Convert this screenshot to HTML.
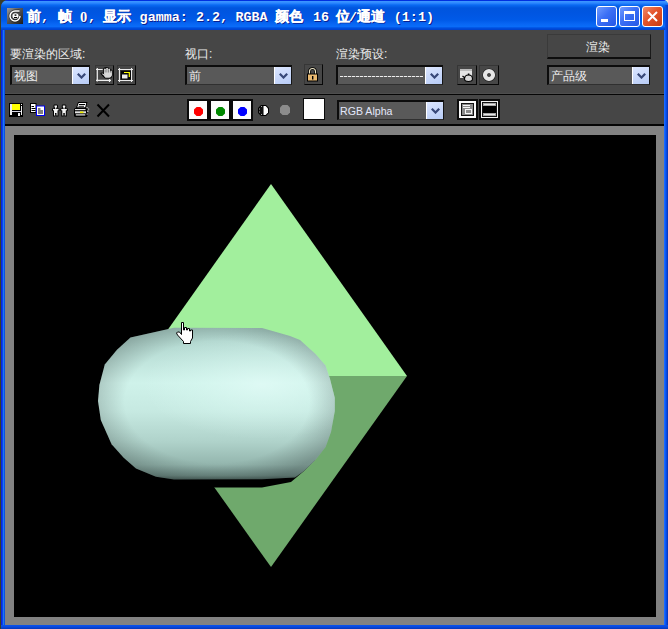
<!DOCTYPE html>
<html><head><meta charset="utf-8">
<style>
html,body{margin:0;padding:0;}
body{width:668px;height:629px;overflow:hidden;position:relative;background:#3a3d28;font-family:"Liberation Sans",sans-serif;}
.a{position:absolute;}
#win{left:1px;top:0;width:667px;height:629px;background:#0a4fe6;border-radius:7px 5px 0 0;}
#title{left:1px;top:0;width:667px;height:30px;border-radius:7px 5px 0 0;
 background:linear-gradient(to bottom,#0030e0 0px,#0030e0 0.5px,#3a94ff 1.5px,#2e88ff 3px,#0a6af2 5px,#0055de 8px,#0056e2 14px,#005ae8 20px,#0866f4 24px,#0a6cf8 26.5px,#0050e0 28px,#0040cc 30px);}
#body{left:5px;top:30px;width:659px;height:595px;background:#464646;}
#frame{left:5px;top:126px;width:659px;height:499px;background:#828282;}
#render{left:14px;top:135px;width:642px;height:482px;background:#000;}
.lbl{position:absolute;color:#ececec;font-size:12px;line-height:12px;white-space:nowrap;}
.dd{position:absolute;background:#595959;border-top:2px solid #0c0c0c;border-left:2px solid #0c0c0c;border-right:1px solid #141414;border-bottom:1px solid #303030;box-sizing:border-box;}
.ddb{position:absolute;right:0;top:0;bottom:0;width:17px;background:linear-gradient(160deg,#dce6ff,#b8ccf6);border-left:1px solid #fff;box-sizing:border-box;}
.btn{position:absolute;box-sizing:border-box;border-top:1px solid #363636;border-left:1px solid #363636;border-right:1px solid #080808;border-bottom:1px solid #080808;background:#474747;}
.sep{position:absolute;left:5px;width:659px;height:2px;background:#1c1c1c;}
.tc{position:absolute;top:8px;font-size:14px;line-height:16px;font-weight:bold;-webkit-text-stroke:0.3px #fff;text-shadow:1px 1px 0 #0a2090;}
.tl{position:absolute;top:10px;font-family:"Liberation Mono",monospace;font-size:13.4px;line-height:16px;font-weight:bold;text-shadow:1px 1px 0 #0a2090;}
.wb{position:absolute;top:6px;width:21px;height:21px;box-sizing:border-box;border:1px solid #fff;border-radius:3px;}
</style></head><body>
<div class="a" style="left:658px;top:0;width:10px;height:10px;background:#e8ecd8"></div>
<div class="a" id="win"></div>
<div class="a" id="title"></div>
<!-- left frame column -->
<div class="a" style="left:1px;top:30px;width:4px;height:599px;background:linear-gradient(to right,#0528e0 0,#0528e0 1px,#0a40ec 1px,#0a40ec 2px,#1c78f0 2px,#1c78f0 3px,#0a50e4 3px)"></div><div class="a" style="left:5px;top:30px;width:1px;height:595px;background:#6a6a58"></div>
<div class="a" style="left:664px;top:30px;width:4px;height:599px;background:linear-gradient(to right,#1a6aff 0,#1a6aff 1px,#0a58f5 1px,#0a58f5 2px,#0848e0 2px,#0848e0 3px,#0638c0 3px)"></div>
<div class="a" style="left:1px;top:625px;width:667px;height:4px;background:linear-gradient(to bottom,#0a54ee,#0a48dc 50%,#0636b8)"></div>
<div class="a" style="left:665px;top:5px;width:3px;height:25px;background:linear-gradient(to right,#0a50e8,#0838c0)"></div>
<div class="a" id="body"></div>
<div class="a" id="frame"></div>
<div class="a" id="render"></div>


<!-- ===== RENDER CONTENT ===== -->
<svg class="a" style="left:0;top:0" width="668" height="629" viewBox="0 0 668 629">
 <defs>
  <linearGradient id="cv" x1="0" y1="328" x2="0" y2="480" gradientUnits="userSpaceOnUse">
   <stop offset="0" stop-color="#a6cbc3"/>
   <stop offset="0.12" stop-color="#b6dbd3"/>
   <stop offset="0.36" stop-color="#cff2ea"/>
   <stop offset="0.55" stop-color="#c6e9e1"/>
   <stop offset="0.75" stop-color="#afd2ca"/>
   <stop offset="0.9" stop-color="#93b5ad"/>
   <stop offset="0.97" stop-color="#718f88"/>
   <stop offset="1" stop-color="#4c625d"/>
  </linearGradient>
  <radialGradient id="hl" cx="262" cy="385" r="120" gradientUnits="userSpaceOnUse" gradientTransform="translate(262 385) scale(1 0.45) translate(-262 -385)">
   <stop offset="0" stop-color="#e8fffb" stop-opacity="0.6"/>
   <stop offset="0.6" stop-color="#e0fff8" stop-opacity="0.25"/>
   <stop offset="1" stop-color="#e0fff8" stop-opacity="0"/>
  </radialGradient>
  <linearGradient id="ch" x1="98" y1="0" x2="335" y2="0" gradientUnits="userSpaceOnUse">
   <stop offset="0" stop-color="#000" stop-opacity="0.14"/>
   <stop offset="0.35" stop-color="#000" stop-opacity="0"/>
   <stop offset="0.82" stop-color="#000" stop-opacity="0"/>
   <stop offset="1" stop-color="#000" stop-opacity="0.08"/>
  </linearGradient>
  <radialGradient id="vg" cx="217" cy="402" r="128" gradientUnits="userSpaceOnUse" gradientTransform="translate(217 402) scale(1 0.66) translate(-217 -402)">
   <stop offset="0" stop-color="#000" stop-opacity="0"/>
   <stop offset="0.72" stop-color="#000" stop-opacity="0"/>
   <stop offset="1" stop-color="#000" stop-opacity="0.2"/>
  </radialGradient>
 </defs>
 <polygon points="271,184 407,376 135,376" fill="#a2ef9d"/>
 <polygon points="135,376 407,376 271,567" fill="#6fa96c"/>
 <polygon points="136,468 156,482 180,487.5 262,487.5 291,482 304,471 315,460" fill="#000"/>
 <path id="cap" d="M174,327.8 L262,328 L290,336 L300,340 L315.5,354 L325.5,365.5 L330,379 L334.8,398 L334.8,411 L331,432 L325.6,447 L315.4,460 L304,471 L295,477.5 L262,479.3 L174,479.5 L156,476.8 L136,468.6 L123.7,457.8 L111.6,444.3 L100.8,420 L98,401 L99.4,385 L104.8,364.6 L117,349.7 L130.5,337.6 Z" fill="url(#cv)"/>
 <path d="M174,327.8 L262,328 L290,336 L300,340 L315.5,354 L325.5,365.5 L330,379 L334.8,398 L334.8,411 L331,432 L325.6,447 L315.4,460 L304,471 L295,477.5 L262,479.3 L174,479.5 L156,476.8 L136,468.6 L123.7,457.8 L111.6,444.3 L100.8,420 L98,401 L99.4,385 L104.8,364.6 L117,349.7 L130.5,337.6 Z" fill="url(#hl)"/>
 <path d="M174,327.8 L262,328 L290,336 L300,340 L315.5,354 L325.5,365.5 L330,379 L334.8,398 L334.8,411 L331,432 L325.6,447 L315.4,460 L304,471 L295,477.5 L262,479.3 L174,479.5 L156,476.8 L136,468.6 L123.7,457.8 L111.6,444.3 L100.8,420 L98,401 L99.4,385 L104.8,364.6 L117,349.7 L130.5,337.6 Z" fill="url(#vg)"/>
 <!-- cursor hand -->
 <path d="M181.5,322.5 L183.5,322.5 L183.5,330 L184.5,330 L184.5,327.5 L186.5,327.5 L186.5,330 L187.5,330 L187.5,328.5 L189.5,328.5 L189.5,331 L190.5,331 L190.5,330 L192.5,330 L192.5,338 L190.5,341.5 L190.5,343.5 L183.5,343.5 L183.5,341.5 L177.5,335 L176.5,333 L177.5,332 L179.5,332 L181.5,334.5 Z" fill="#fff" stroke="#000" stroke-width="1"/>
</svg>

<!-- ===== TITLE ===== -->
<div class="a" style="left:7px;top:8px;width:16px;height:16px;background:linear-gradient(135deg,#9a9a9a 0%,#555 45%,#1a1a1a 100%);"></div>
<svg class="a" style="left:7px;top:8px" width="16" height="16" viewBox="0 0 16 16">
 <path d="M12.5,3 L8,3 A5,5 0 1 0 13,8" fill="none" stroke="#000" stroke-width="2.8" stroke-opacity="0.6"/>
 <path d="M12.5,3 L8,3 A5,5 0 1 0 13,8" fill="none" stroke="#fff" stroke-width="1.5"/>
 <ellipse cx="8.5" cy="8" rx="3" ry="2.7" fill="#fff"/>
 <rect x="7.6" y="6.4" width="1.8" height="1.4" fill="#000"/>
 <rect x="7" y="9" width="3.2" height="1" fill="#000"/>
</svg>
<div class="a" id="ttl" style="left:0;top:0;width:668px;height:30px;color:#fff;white-space:nowrap;">
 <span class="tc" style="left:27px">前</span>
 <span class="tl" style="left:41px">,</span>
 <span class="tc" style="left:57.5px">帧</span>
 <span class="tl" style="left:80px;font-family:'Liberation Serif',serif;font-size:14.5px;top:9px">0</span><span class="tl" style="left:88px">,</span>
 <span class="tc" style="left:103px">显示</span>
 <span class="tl" style="left:139.6px">gamma:</span>
 <span class="tl" style="left:196px">2.2,</span>
 <span class="tl" style="left:235.4px">RGBA</span>
 <span class="tc" style="left:275.2px">颜色</span>
 <span class="tl" style="left:312.9px">16</span>
 <span class="tc" style="left:335.7px">位</span>
 <span class="tl" style="left:349px">/</span>
 <span class="tc" style="left:357px">通道</span>
 <span class="tl" style="left:393.8px">(1:1)</span>
</div>

<!-- window buttons -->
<div class="wb" style="left:596px;background:linear-gradient(135deg,#6f9bff 0%,#3b6ff5 45%,#2457e6 100%);"><div class="a" style="left:4px;top:12px;width:7px;height:3px;background:#fff"></div></div>
<div class="wb" style="left:619px;background:linear-gradient(135deg,#6f9bff 0%,#3b6ff5 45%,#2457e6 100%);"><div class="a" style="left:4px;top:4px;width:11px;height:10px;box-sizing:border-box;border:1px solid #fff;border-top-width:3px;"></div></div>
<div class="wb" style="left:642px;background:linear-gradient(135deg,#f08a6a 0%,#e4542a 45%,#c83c12 100%);">
 <svg class="a" style="left:3px;top:3px" width="13" height="13" viewBox="0 0 13 13"><path d="M2,2 L11,11 M11,2 L2,11" stroke="#fff" stroke-width="2"/></svg>
</div>

<!-- ===== TOOLBAR ROW 1 ===== -->
<div class="lbl" style="left:10px;top:48px;">要渲染的区域:</div>
<div class="lbl" style="left:185px;top:48px;">视口:</div>
<div class="lbl" style="left:336px;top:48px;">渲染预设:</div>

<div class="dd" style="left:10px;top:65px;width:80px;height:20px;"><div class="lbl" style="left:2px;top:3px;">视图</div><div class="ddb"><svg class="a" style="left:4px;top:6px" width="9" height="6" viewBox="0 0 9 6"><polygon points="0,1.6 1.6,0 4.5,2.9 7.4,0 9,1.6 4.5,6.1" fill="#384878"/></svg></div></div>
<div class="dd" style="left:185px;top:65px;width:107px;height:20px;"><div class="lbl" style="left:2px;top:3px;">前</div><div class="ddb"><svg class="a" style="left:4px;top:6px" width="9" height="6" viewBox="0 0 9 6"><polygon points="0,1.6 1.6,0 4.5,2.9 7.4,0 9,1.6 4.5,6.1" fill="#384878"/></svg></div></div>
<div class="dd" style="left:336px;top:65px;width:107px;height:20px;"><div class="a" style="left:2px;top:9px;width:83px;height:1px;background:repeating-linear-gradient(to right,#eeeeee 0,#eeeeee 3px,#7a7a7a 3px,#7a7a7a 4px);"></div><div class="ddb"><svg class="a" style="left:4px;top:6px" width="9" height="6" viewBox="0 0 9 6"><polygon points="0,1.6 1.6,0 4.5,2.9 7.4,0 9,1.6 4.5,6.1" fill="#384878"/></svg></div></div>
<div class="dd" style="left:547px;top:65px;width:103px;height:20px;"><div class="lbl" style="left:2px;top:3px;">产品级</div><div class="ddb"><svg class="a" style="left:4px;top:6px" width="9" height="6" viewBox="0 0 9 6"><polygon points="0,1.6 1.6,0 4.5,2.9 7.4,0 9,1.6 4.5,6.1" fill="#384878"/></svg></div></div>

<div class="btn" style="left:95px;top:65px;width:19px;height:20px;"></div>
<div class="btn" style="left:117px;top:65px;width:19px;height:20px;"></div>
<div class="btn" style="left:304px;top:64px;width:19px;height:21px;"></div>
<div class="btn" style="left:457px;top:65px;width:20px;height:20px;"></div>
<div class="btn" style="left:479px;top:65px;width:20px;height:20px;"></div>

<div class="a" style="left:547px;top:34px;width:104px;height:25px;box-sizing:border-box;border:1px solid #3a3a3a;border-bottom:2px solid #0e0e0e;border-right:1px solid #1a1a1a;"></div>
<div class="lbl" style="left:586px;top:41px;">渲染</div>

<div class="sep" style="top:93px;height:1px;background:#4e4e4e"></div><div class="sep" style="top:94px;height:1px;background:#060606"></div>
<div class="sep" style="top:124px;background:#050505"></div>

<!-- ===== TOOLBAR ROW 2 ===== -->
<div class="a" style="left:187px;top:99px;width:22px;height:22px;box-sizing:border-box;background:#fdfdfd;border:2px solid #0a0a0a;"><svg class="a" style="left:5px;top:6px" width="9" height="9" viewBox="0 0 9 9"><polygon points="2.6,0 6.4,0 9,2.6 9,6.4 6.4,9 2.6,9 0,6.4 0,2.6" fill="#f00"/></svg></div>
<div class="a" style="left:209px;top:99px;width:22px;height:22px;box-sizing:border-box;background:#fdfdfd;border:2px solid #0a0a0a;"><svg class="a" style="left:5px;top:6px" width="9" height="9" viewBox="0 0 9 9"><polygon points="2.6,0 6.4,0 9,2.6 9,6.4 6.4,9 2.6,9 0,6.4 0,2.6" fill="#080"/></svg></div>
<div class="a" style="left:231px;top:99px;width:22px;height:22px;box-sizing:border-box;background:#fdfdfd;border:2px solid #0a0a0a;"><svg class="a" style="left:5px;top:6px" width="9" height="9" viewBox="0 0 9 9"><polygon points="2.6,0 6.4,0 9,2.6 9,6.4 6.4,9 2.6,9 0,6.4 0,2.6" fill="#00f"/></svg></div>
<div class="a" style="left:303px;top:98px;width:22px;height:22px;box-sizing:border-box;background:#fff;border:1px solid #0a0a0a;"></div>

<div class="dd" style="left:337px;top:100px;width:107px;height:20px;"><div class="a" style="left:1px;top:3px;font-size:10.6px;line-height:12px;color:#e4e8fa;white-space:nowrap;">RGB Alpha</div><div class="ddb"><svg class="a" style="left:4px;top:6px" width="9" height="6" viewBox="0 0 9 6"><polygon points="0,1.6 1.6,0 4.5,2.9 7.4,0 9,1.6 4.5,6.1" fill="#384878"/></svg></div></div>


<!-- ===== ICONS ROW 1 ===== -->
<svg class="a" style="left:94px;top:64px" width="20" height="20" viewBox="0 0 20 20">
 <path d="M2,5.5 L8.7,5.5 M3.3,4 L3.3,17.5 M2,16.4 L17,16.4 M15.5,15 L15.5,18" fill="none" stroke="#eeeeee" stroke-width="1.2"/>
 <path d="M6.3,9.5 Q8,7.8 9.3,9 L9.3,4.5 Q10,3.4 11,3.6 Q11.8,2.6 13,3 Q14,3 14.5,3.8 Q15.5,3.6 16.2,4.6 L16.5,5.5 Q17.8,5.3 18.5,6.5 L18.5,11.5 Q17.8,14.6 15.8,14.6 L11,14.6 Q8.5,12.5 6.3,9.5 Z" fill="#000"/>
 <rect x="10.2" y="4.5" width="1.5" height="6" rx="0.7" fill="#eaeaea"/>
 <rect x="12.3" y="3.8" width="1.5" height="6" rx="0.7" fill="#f2f2f2"/>
 <rect x="14.4" y="4.6" width="1.5" height="6" rx="0.7" fill="#eaeaea"/>
 <rect x="16.4" y="6.4" width="1.4" height="5" rx="0.7" fill="#dedede"/>
 <path d="M10.2,8.5 L17.8,8.5 L17.8,11.5 Q17.3,13.6 15.5,13.8 L11.5,13.8 Q10.5,13 10.2,12 Z" fill="#d8d8d8"/>
 <path d="M7.5,9.6 Q8.5,9 10.5,10.8 L11,12.5 Q9.5,11.8 7.5,9.6 Z" fill="#e4e4e4"/>
</svg>
<svg class="a" style="left:117px;top:65px" width="19" height="20" viewBox="0 0 19 20">
 <rect x="3" y="5" width="11" height="10" fill="#2a2a2a"/>
 <path d="M1,4.5 L16,4.5 M1,15.5 L16,15.5 M2.5,3 L2.5,17 M14.5,3 L14.5,17" fill="none" stroke="#ececec" stroke-width="1.1"/>
 <rect x="4" y="6" width="10" height="8.5" fill="#050505"/>
 <path d="M7,7.5 L12.3,7.5 L12.3,12" fill="none" stroke="#ffff00" stroke-width="1.2"/>
 <rect x="5" y="9.5" width="5.5" height="4" fill="#ececec"/>
</svg>
<svg class="a" style="left:303px;top:64px" width="19" height="21" viewBox="0 0 19 21">
 <path d="M6.5,10 L6.5,7.5 Q6.5,4.5 9.5,4.5 Q12.5,4.5 12.5,7.5 L12.5,10" fill="none" stroke="#000" stroke-width="2.6"/>
 <path d="M6.5,10 L6.5,7.5 Q6.5,4.5 9.5,4.5 Q12.5,4.5 12.5,7.5 L12.5,10" fill="none" stroke="#f0e8c8" stroke-width="1.1"/>
 <rect x="4.5" y="10" width="10" height="7" fill="#e8b870" stroke="#000" stroke-width="1"/>
 <rect x="9" y="12" width="1.4" height="3.5" fill="#000"/>
</svg>
<svg class="a" style="left:457px;top:65px" width="20" height="20" viewBox="0 0 20 20">
 <rect x="3" y="4" width="12" height="9" fill="#e4e4e4"/>
 <rect x="3" y="4" width="12" height="2" fill="#bbb"/>
 <path d="M7.5,14 Q7.5,10 11.5,10 Q15.5,10 15.5,14 Q15.5,16.5 11.5,16.5 Q7.5,16.5 7.5,14 Z" fill="#d8d8d8" stroke="#000" stroke-width="1.1"/>
 <path d="M5.5,11 L8,13" stroke="#000" stroke-width="1.2"/>
 <rect x="10.8" y="8.5" width="1.6" height="1.6" fill="#000"/>
</svg>
<svg class="a" style="left:479px;top:65px" width="20" height="20" viewBox="0 0 20 20">
 <circle cx="10" cy="10" r="6.6" fill="#1a1a1a"/>
 <circle cx="10" cy="10" r="3.9" fill="none" stroke="#e6e6e6" stroke-width="4.4"/>
 <circle cx="10" cy="10" r="1.8" fill="#444"/>
</svg>

<!-- ===== ICONS ROW 2 ===== -->
<svg class="a" style="left:9px;top:103px" width="14" height="14" viewBox="0 0 14 14" shape-rendering="crispEdges">
 <rect x="0" y="0" width="14" height="14" fill="#000"/>
 <rect x="1" y="1" width="2" height="11" fill="#ececec"/>
 <rect x="3" y="1" width="8" height="6" fill="#ffff00"/>
 <rect x="12" y="1" width="1" height="1" fill="#fff"/>
 <rect x="11.5" y="3" width="1.5" height="9" fill="#ececec"/>
 <rect x="3" y="8" width="8.5" height="1" fill="#d8d8e8"/>
 <rect x="9" y="9.5" width="2" height="3" fill="#f4f4f4"/>
</svg>
<svg class="a" style="left:30px;top:103px" width="16" height="14" viewBox="0 0 16 14">
 <rect x="0" y="0" width="6.5" height="10" fill="#000"/>
 <rect x="1" y="1" width="4.5" height="8" fill="#fff"/>
 <rect x="1.5" y="3" width="2.5" height="1" fill="#000"/>
 <rect x="1.5" y="5" width="4" height="1" fill="#000"/>
 <rect x="1.5" y="7" width="4" height="1" fill="#000"/>
 <rect x="6" y="2.5" width="9" height="10.5" fill="#0000f0"/>
 <rect x="7" y="3.5" width="7" height="8.5" fill="#fff"/>
 <rect x="8" y="5.5" width="2.5" height="1" fill="#000"/>
 <rect x="8" y="7.5" width="5" height="1" fill="#000"/>
 <rect x="8" y="9.5" width="5" height="1" fill="#000"/>
</svg>
<svg class="a" style="left:51.5px;top:104px" width="17" height="13" viewBox="0 0 17 13">
<g transform="translate(0 0)">
  <path d="M2,0.5 L5,0.5 L6,1.5 L6,3.5 L5,4.5 L7.5,4.5 L7.5,7 L6.5,7 L6.5,12.5 L4,12.5 L4,10 L3.5,10 L3.5,12.5 L1,12.5 L1,7 L0,7 L0,4.5 L2.5,4.5 L1.5,3.5 L1.5,1.5 Z" fill="#000"/>
  <path d="M2.5,1.5 L5,1.5 L5,3 L4.2,4 L4.2,5 L6.5,5 L6.5,6.2 L5.5,6.5 L5.5,11.5 L4.5,11.5 L4.5,9 L3,9 L3,11.5 L2,11.5 L2,6.5 L1,6.2 L1,5 L3.3,5 L3.3,4 L2.5,3 Z" fill="#f2f2f2"/>
 </g><g transform="translate(8.3 0)">
  <path d="M2,0.5 L5,0.5 L6,1.5 L6,3.5 L5,4.5 L7.5,4.5 L7.5,7 L6.5,7 L6.5,12.5 L4,12.5 L4,10 L3.5,10 L3.5,12.5 L1,12.5 L1,7 L0,7 L0,4.5 L2.5,4.5 L1.5,3.5 L1.5,1.5 Z" fill="#000"/>
  <path d="M2.5,1.5 L5,1.5 L5,3 L4.2,4 L4.2,5 L6.5,5 L6.5,6.2 L5.5,6.5 L5.5,11.5 L4.5,11.5 L4.5,9 L3,9 L3,11.5 L2,11.5 L2,6.5 L1,6.2 L1,5 L3.3,5 L3.3,4 L2.5,3 Z" fill="#f2f2f2"/>
 </g>
</svg>
<svg class="a" style="left:74px;top:102px" width="16" height="15" viewBox="0 0 16 15">
 <path d="M4,0 L13.5,0 L12,6 L2,6 Z" fill="#000"/>
 <path d="M4.7,1 L12.2,1 L11.2,5.2 L3.3,5.2 Z" fill="#fff"/>
 <rect x="5" y="2" width="6" height="1" fill="#000"/>
 <rect x="4.5" y="3.8" width="5.5" height="0.9" fill="#000"/>
 <rect x="0" y="6" width="13.5" height="9" rx="1.5" fill="#000"/>
 <rect x="1" y="7" width="10.5" height="1.2" fill="#e8e8e8"/>
 <rect x="1" y="9.3" width="11" height="2" fill="#e0e0e0"/>
 <rect x="6" y="9.5" width="3.5" height="1.6" fill="#f0f000"/>
 <rect x="1.8" y="12.3" width="9.5" height="1.2" fill="#e8e8e8"/>
 <rect x="12.5" y="5" width="1.2" height="1.2" fill="#bbb"/>
 <rect x="14" y="6.5" width="1.2" height="1.2" fill="#bbb"/>
 <rect x="13.2" y="8.5" width="1.2" height="1.5" fill="#ccc"/>
 <rect x="12.5" y="11.5" width="1.2" height="1.2" fill="#aab"/>
</svg>
<svg class="a" style="left:96px;top:103px" width="15" height="15" viewBox="0 0 15 15">
 <path d="M1.5,1.5 L13,13.5 M13,1.5 L1.5,13.5" stroke="#000" stroke-width="2"/>
</svg>
<svg class="a" style="left:258px;top:105px" width="11" height="11" viewBox="0 0 11 11">
 <polygon points="3,0 8,0 11,3 11,8 8,11 3,11 0,8 0,3" fill="#000"/>
 <polygon points="5.5,1 7.6,1 10,3.4 10,7.6 7.6,10 5.5,10" fill="#fff"/>
 <polygon points="3.4,1 5,1 5,10 3.4,10 1,7.6 1,3.4" fill="#111"/>
 <rect x="1" y="3.5" width="0.8" height="1" fill="#ccc"/><rect x="1" y="6.5" width="0.8" height="1" fill="#ccc"/><rect x="3" y="1" width="1" height="0.8" fill="#ccc"/><rect x="3" y="9.2" width="1" height="0.8" fill="#ccc"/>
</svg>
<svg class="a" style="left:280px;top:105px" width="10" height="10" viewBox="0 0 10 10"><polygon points="2.5,0 7.5,0 10,2.5 10,7.5 7.5,10 2.5,10 0,7.5 0,2.5" fill="#8c8c8c"/></svg>

<svg class="a" style="left:457px;top:99px" width="22" height="22" viewBox="0 0 22 22" shape-rendering="crispEdges">
 <rect x="0" y="0" width="21" height="21" fill="#0c0c0c"/>
 <rect x="2" y="2" width="17" height="17" fill="#fafafa"/>
 <rect x="4" y="4" width="13" height="13" fill="#111"/>
 <rect x="5" y="5" width="11" height="11" fill="#8a8a8a"/>
 <rect x="6" y="6" width="7" height="1" fill="#f4f4f4"/>
 <rect x="6" y="8" width="7" height="1" fill="#f4f4f4"/>
 <rect x="8" y="10" width="7" height="5" fill="#f4f4f4"/>
 <rect x="9" y="11" width="5" height="3" fill="#8a8a8a"/>
</svg>
<svg class="a" style="left:479px;top:99px" width="22" height="22" viewBox="0 0 22 22" shape-rendering="crispEdges">
 <rect x="0" y="0" width="21" height="21" fill="#0c0c0c"/>
 <rect x="2" y="2" width="17" height="17" fill="#f4f4f4"/>
 <rect x="3" y="3" width="15" height="15" fill="#111"/>
 <rect x="4" y="4" width="13" height="13" fill="#a8a8a8"/>
 <rect x="5" y="5" width="11" height="1" fill="#e8e8e8"/>
 <rect x="4" y="7" width="13" height="7" fill="#000"/>
 <rect x="5" y="15" width="11" height="1" fill="#e8e8e8"/>
</svg>

</body></html>
